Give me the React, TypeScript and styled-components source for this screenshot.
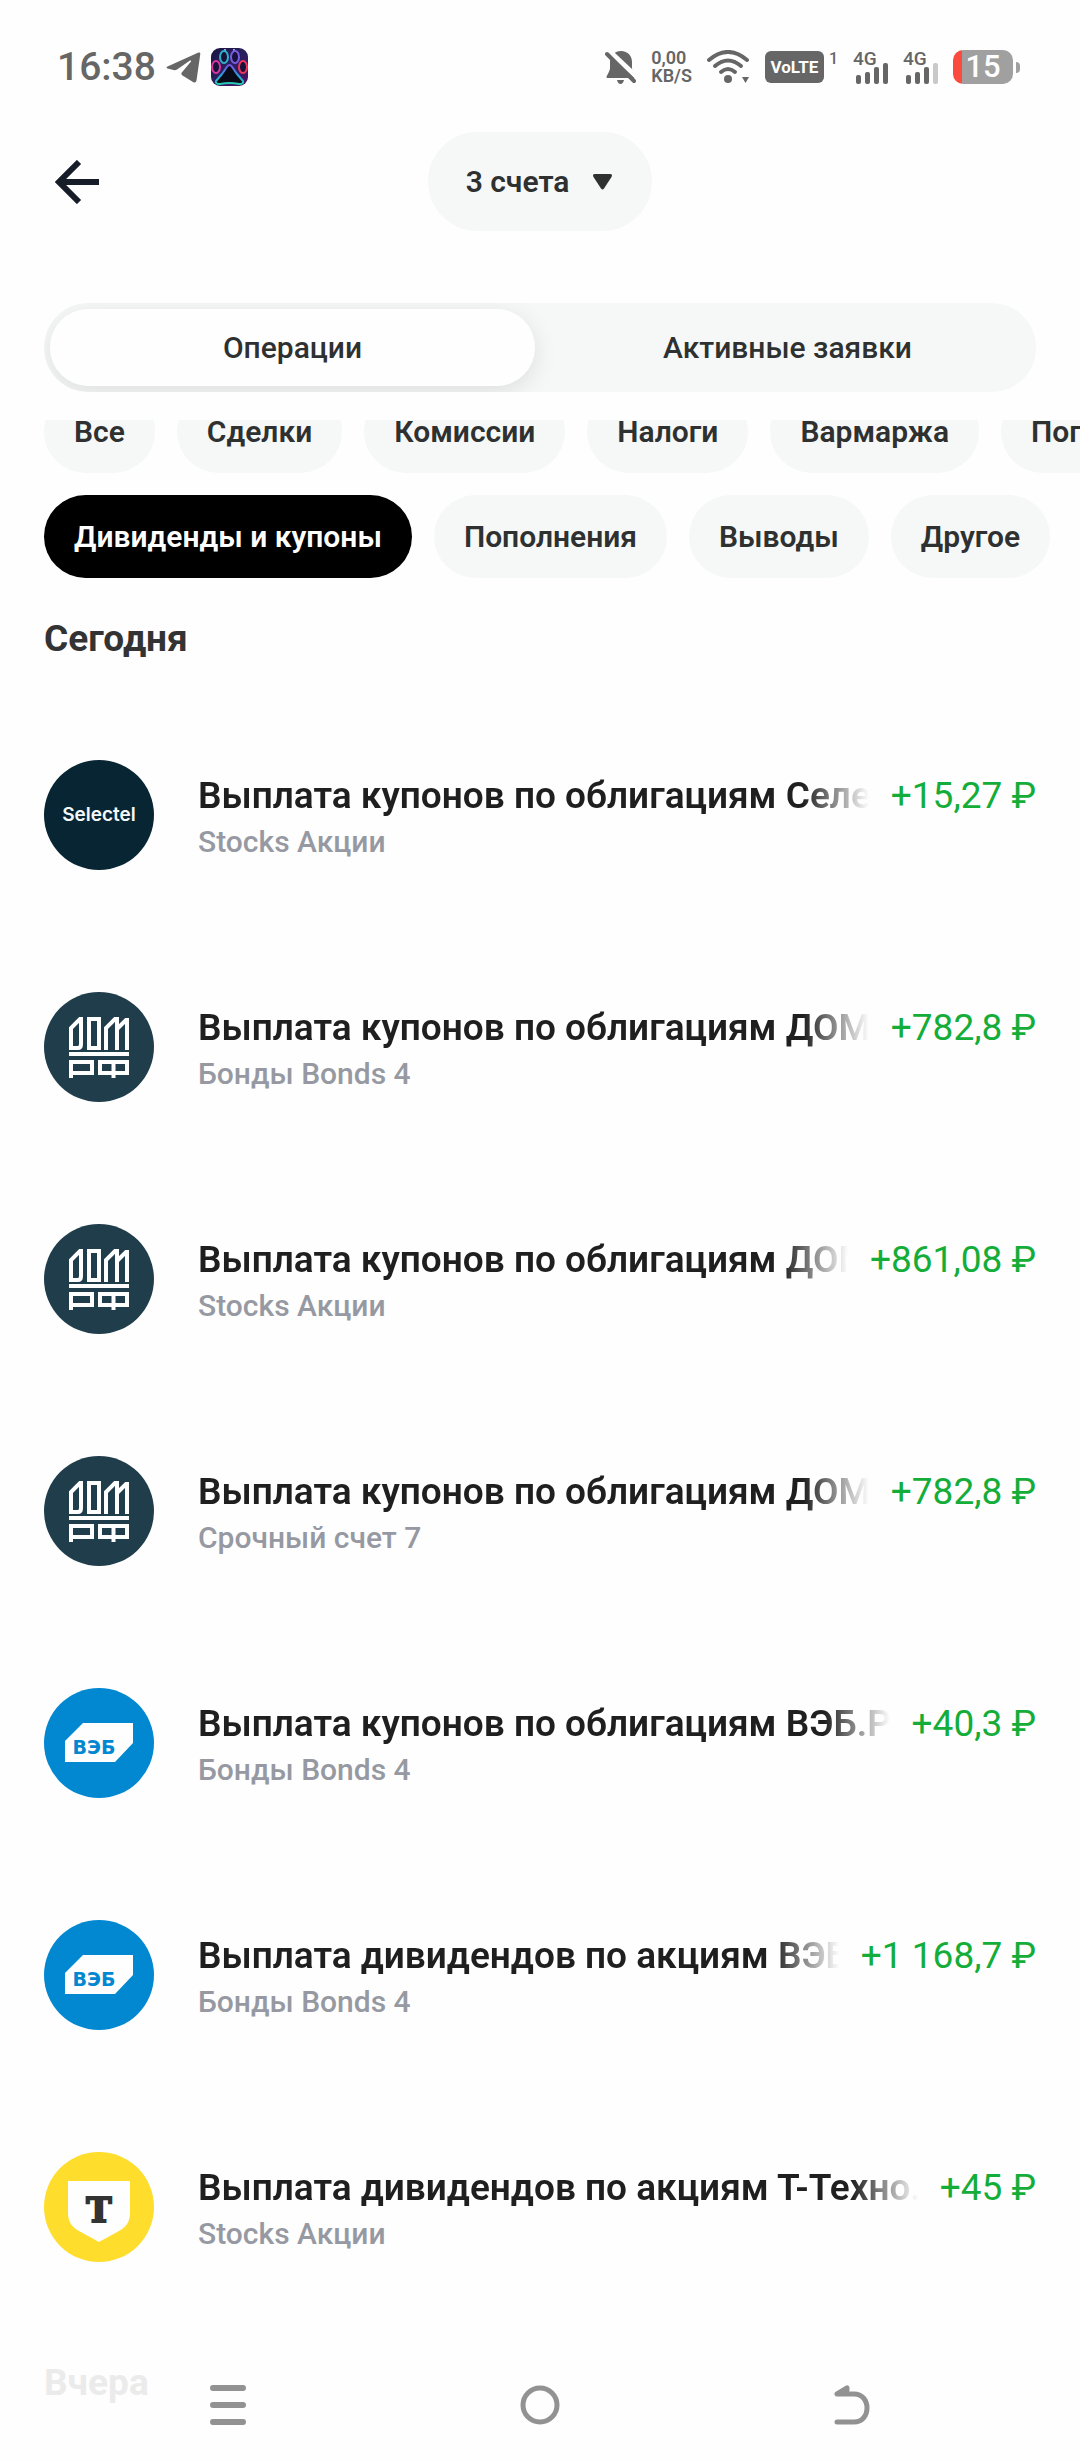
import React from "react";
import styled, { createGlobalStyle } from "styled-components";

const GlobalStyle = createGlobalStyle`
  *, *::before, *::after { box-sizing: border-box; }
  body {
    margin: 0;
    background: #fefefe;
    color: #2f3131;
    font-family: Roboto, "Noto Sans", sans-serif;
    overflow-x: hidden;
  }
  button { font: inherit; color: inherit; border: 0; padding: 0; background: none; cursor: pointer; }
  h2, p, ul { margin: 0; padding: 0; }
  svg { display: block; flex: none; }
`;

const Screen = styled.div`
  display: flex;
  flex-direction: column;
  min-height: 100vh;
  overflow: hidden;
`;

const StatusBar = styled.header`
  display: flex;
  justify-content: space-between;
  align-items: center;
  height: 132px;
  padding: 2px 60px 0 57px;
  color: #666666;
`;

const StatusGroup = styled.div<{ $gap: number }>`
  display: flex;
  align-items: center;
  gap: ${(p) => p.$gap}px;
`;

const Clock = styled.time`
  font-size: 39px;
  line-height: 46px;
  font-weight: 500;
`;

const NetSpeed = styled.div`
  font-size: 18px;
  line-height: 18px;
  font-weight: 600;
`;

const VolteBadge = styled.span`
  display: flex;
  align-items: center;
  justify-content: center;
  width: 59px;
  height: 32px;
  border-radius: 6px;
  background: #666666;
  color: #fefefe;
  font-size: 17px;
  font-weight: 700;
`;

const SimNumber = styled.sup`
  align-self: flex-start;
  font-size: 16px;
  line-height: 16px;
  font-weight: 500;
`;

const Signal = styled.div`
  display: flex;
  flex-direction: column;
  width: 35px;
  font-size: 19px;
  line-height: 15px;
  font-weight: 500;
`;

const SignalBars = styled.svg`
  margin: -4px 0 0 3px;
`;

const Battery = styled.div`
  display: flex;
  align-items: center;
  gap: 3px;
`;

const BatteryBody = styled.span`
  display: flex;
  align-items: center;
  justify-content: center;
  width: 60px;
  height: 34px;
  border-radius: 10px;
  background: linear-gradient(90deg, #fb4b3e 9px, #a0a0a0 9px);
  color: #fefefe;
  font-size: 31px;
  line-height: 34px;
  font-weight: 500;
`;

const BatteryTip = styled.span`
  width: 4px;
  height: 11px;
  border-radius: 0 4px 4px 0;
  background: #a0a0a0;
`;

const TopBar = styled.nav`
  display: grid;
  grid-template-columns: 1fr auto 1fr;
  align-items: center;
  padding: 0 44px;
`;

const BackButton = styled.button`
  display: flex;
  justify-self: start;
  padding: 11px;
`;

const AccountButton = styled.button`
  display: flex;
  align-items: center;
  gap: 24px;
  height: 99px;
  padding: 0 40px 0 38px;
  border-radius: 50px;
  background: #f6f8f8;
  font-size: 30px;
  font-weight: 600;
`;

const Tabs = styled.div`
  display: grid;
  grid-template-columns: 1fr 1fr;
  column-gap: 10px;
  height: 89px;
  margin: 72px 44px 0;
  padding: 6px;
  border-radius: 44px;
  background: #f6f8f8;
  overflow: hidden;
`;

const Tab = styled.button<{ $active?: boolean }>`
  border-radius: 38px;
  font-size: 30px;
  font-weight: 500;
  background: ${(p) => (p.$active ? "#fefefe" : "transparent")};
  box-shadow: ${(p) => (p.$active ? "0 6px 24px rgba(0, 0, 0, 0.1)" : "none")};
`;

const Filters = styled.div`
  margin-top: 28px;
  overflow: hidden;
`;

const FilterRows = styled.div`
  display: flex;
  flex-direction: column;
  gap: 22px;
  margin-top: -30px;
  padding-left: 44px;
`;

const FilterRow = styled.div`
  display: flex;
  gap: 22px;
`;

const Chip = styled.button<{ $active?: boolean }>`
  flex: none;
  height: 83px;
  padding: 0 30px;
  border-radius: 42px;
  background: ${(p) => (p.$active ? "#000000" : "#f6f8f8")};
  color: ${(p) => (p.$active ? "#fefefe" : "#2f3131")};
  font-size: 30px;
  font-weight: 600;
  white-space: nowrap;
`;

const Day = styled.section`
  display: flex;
  flex-direction: column;
  padding-top: 40px;
`;

const DayTitle = styled.h2<{ $faded?: boolean }>`
  padding: 0 44px;
  font-size: 37px;
  line-height: 42px;
  font-weight: 700;
  color: ${(p) => (p.$faded ? "#ebebeb" : "#333333")};
`;

const Operations = styled.ul`
  display: flex;
  flex-direction: column;
  gap: 122px;
  margin: 100px 44px 60px;
  list-style: none;
`;

const Operation = styled.li`
  display: flex;
  align-items: flex-start;
  gap: 44px;
  height: 110px;
`;

const Details = styled.div`
  flex: 1;
  min-width: 0;
  padding-top: 14px;
`;

const Headline = styled.div`
  display: flex;
  gap: 22px;
  font-size: 37px;
  line-height: 44px;
`;

const Title = styled.p`
  flex: 1;
  min-width: 0;
  overflow: hidden;
  white-space: nowrap;
  font-weight: 600;
  color: #1f1f1f;
  mask-image: linear-gradient(270deg, transparent, #000000 66px);
`;

const Amount = styled.span`
  flex: none;
  color: #14ad39;
`;

const Account = styled.p`
  margin-top: 6px;
  font-size: 30px;
  line-height: 36px;
  font-weight: 500;
  color: #9699a2;
`;

const SystemNav = styled.nav`
  position: fixed;
  left: 0;
  right: 0;
  bottom: 0;
  display: grid;
  grid-template-columns: repeat(3, 1fr);
  height: 110px;
  padding: 0 72px;
`;

const NavButton = styled.button`
  display: flex;
  align-items: center;
  justify-content: center;
`;

const LogoText = styled.text<{ $family: string; $size: number; $weight: number }>`
  font-family: ${(p) => p.$family}, sans-serif;
  font-size: ${(p) => p.$size}px;
  font-weight: ${(p) => p.$weight};
  text-anchor: middle;
`;

type Brand = "selectel" | "domrf" | "veb" | "tbank";

function SelectelLogo() {
  return (
    <svg width="110" height="110" viewBox="0 0 110 110" aria-hidden="true">
      <circle cx="55" cy="55" r="55" fill="#072532" />
      <LogoText x="55" y="61" fill="#f4f8fa" $family="Inter" $size={19} $weight={600}>Selectel</LogoText>
    </svg>
  );
}

function DomRfLogo() {
  return (
    <svg width="110" height="110" viewBox="0 0 110 110" aria-hidden="true">
      <circle cx="55" cy="55" r="55" fill="#1f3d4b" />
      <g fill="none" stroke="#ffffff" strokeWidth="4">
        <path d="M27 56V36L36 27H37V52Q37 56 34 56Z" />
        <path d="M45 27H55V56H45Z" />
        <path d="M62 58V36L71 27H73V58M73 37L82 28H83V58" />
        <path d="M25 62H85" />
        <path d="M27 86V70H48V81H27" />
        <path d="M56 70H83V81H56ZM69.500 70V86" />
      </g>
    </svg>
  );
}

function VebLogo() {
  return (
    <svg width="110" height="110" viewBox="0 0 110 110" aria-hidden="true">
      <circle cx="55" cy="55" r="55" fill="#0288d1" />
      <path d="M39 35H89V55L71 74H21V53Z" fill="#fefefe" />
      <LogoText x="50" y="66" fill="#0288d1" $family="DejaVu Sans" $size={19} $weight={700}>ВЭБ</LogoText>
    </svg>
  );
}

function TBankLogo() {
  return (
    <svg width="110" height="110" viewBox="0 0 110 110" aria-hidden="true">
      <circle cx="55" cy="55" r="55" fill="#ffdd2d" />
      <path d="M24 29H86V61C86 70 82 75 75 79L55 90L35 79C28 75 24 70 24 61Z" fill="#fefefe" />
      <LogoText x="55" y="70" fill="#333333" stroke="#333333" strokeWidth="2" $family="DejaVu Serif" $size={34} $weight={700}>Т</LogoText>
    </svg>
  );
}

const logos: Record<Brand, () => React.ReactElement> = {
  selectel: SelectelLogo,
  domrf: DomRfLogo,
  veb: VebLogo,
  tbank: TBankLogo,
};

const operations: { brand: Brand; title: string; account: string; amount: string }[] = [
  { brand: "selectel", title: "Выплата купонов по облигациям Селектел", account: "Stocks Акции", amount: "+15,27 ₽" },
  { brand: "domrf", title: "Выплата купонов по облигациям ДОМ.РФ", account: "Бонды Bonds 4", amount: "+782,8 ₽" },
  { brand: "domrf", title: "Выплата купонов по облигациям ДОМ.РФ", account: "Stocks Акции", amount: "+861,08 ₽" },
  { brand: "domrf", title: "Выплата купонов по облигациям ДОМ.РФ", account: "Срочный счет 7", amount: "+782,8 ₽" },
  { brand: "veb", title: "Выплата купонов по облигациям ВЭБ.РФ", account: "Бонды Bonds 4", amount: "+40,3 ₽" },
  { brand: "veb", title: "Выплата дивидендов по акциям ВЭБ.РФ", account: "Бонды Bonds 4", amount: "+1 168,7 ₽" },
  { brand: "tbank", title: "Выплата дивидендов по акциям Т-Техно...", account: "Stocks Акции", amount: "+45 ₽" },
];

const filterRows = [
  ["Все", "Сделки", "Комиссии", "Налоги", "Вармаржа", "Погашения"],
  ["Дивиденды и купоны", "Пополнения", "Выводы", "Другое"],
];

function PawIcon() {
  return (
    <svg width="37" height="38" viewBox="0 0 37 38" aria-hidden="true">
      <defs>
        <linearGradient id="pad" x1="0" y1="0" x2="0" y2="1">
          <stop offset="0" stopColor="#7a4fe0" />
          <stop offset="0.500" stopColor="#2f9be0" />
          <stop offset="1" stopColor="#25c9b0" />
        </linearGradient>
        <linearGradient id="glow" x1="0" y1="0" x2="1" y2="1">
          <stop offset="0" stopColor="#1a1440" />
          <stop offset="0.500" stopColor="#2a2060" />
          <stop offset="1" stopColor="#4a1268" />
        </linearGradient>
      </defs>
      <rect width="37" height="38" rx="9" fill="url(#glow)" />
      <g fill="#16123a" strokeWidth="2">
        <path d="M14 1V4M23 1V4" stroke="#9aa8d8" />
        <ellipse cx="13" cy="9" rx="4" ry="6" stroke="#2fb0c8" />
        <ellipse cx="24" cy="9" rx="4" ry="6" stroke="#7a5be0" />
        <ellipse cx="5" cy="19" rx="4" ry="6" stroke="#d8359f" />
        <ellipse cx="32" cy="19" rx="4" ry="6" stroke="#f0355a" />
        <path d="M18.500 17C21 17 22 21 26 26L32 33Q33 36 28 36Q18.500 34 9 36Q4 36 5 33L11 26C15 21 16 17 18.500 17Z" fill="#080a18" stroke="url(#pad)" />
      </g>
    </svg>
  );
}

function SignalMeter({ weak }: { weak?: boolean }) {
  return (
    <Signal>
      4G
      <SignalBars width="32" height="22" viewBox="0 0 32 22" aria-hidden="true">
        <g fill="#666666">
          <rect x="0" y="13" width="5" height="9" rx="2" />
          <rect x="9" y="10" width="5" height="12" rx="2" />
          <rect x="18" y="5" width="5" height="17" rx="2" />
          <rect x="27" y="1" width="5" height="21" rx="2" fill={weak ? "#c9c9c9" : "#666666"} />
        </g>
      </SignalBars>
    </Signal>
  );
}

export default function App() {
  return (
    <>
      <GlobalStyle />
      <Screen>
        <StatusBar>
          <StatusGroup $gap={10}>
            <Clock>16:38</Clock>
            <svg width="35" height="31" viewBox="0 0 35 31" fill="#666666" aria-label="Telegram">
              <path d="M1.500 14.500L32.500 .600Q34.500 0 34.300 2L30.500 28.500Q29.800 31.500 27 30L16.500 23.500Q14.500 22 16 20.300L25 9.500Q25.500 8 24 8.500L11 17.500Q9.500 18.500 7.500 18L1.500 16.500Q-.5 15.500 1.500 14.500Z" />
            </svg>
            <PawIcon />
          </StatusGroup>
          <StatusGroup $gap={15}>
            <svg width="31" height="34" viewBox="0 0 31 34" aria-label="Без звука">
              <path d="M16 1C23 1 27 6 27 12V18C27 22 31 26 30 28H2C0 27 5 22 5 18V12C5 6 9 1 16 1Z" fill="#666666" />
              <path d="M12 30H19Q18 34 15.500 34Q13 34 12 30Z" fill="#666666" />
              <path d="M0 -3L33 28" stroke="#fefefe" strokeWidth="5" />
              <path d="M2 4L29 31" stroke="#666666" strokeWidth="4" strokeLinecap="round" />
            </svg>
            <NetSpeed>0,00<br />KB/S</NetSpeed>
            <svg width="43" height="34" viewBox="0 0 43 34" aria-label="Wi-Fi">
              <g fill="none" stroke="#666666" strokeWidth="4" strokeLinecap="round">
                <path d="M2 10Q21 -6 40 10" />
                <path d="M8 16Q21 5 34 16" />
                <path d="M14 22Q21 16 28 22" />
              </g>
              <circle cx="21" cy="29" r="4" fill="#666666" />
              <path d="M35 27H42L38.500 33Z" fill="#666666" />
            </svg>
            <StatusGroup $gap={5}>
              <VolteBadge>VoLTE</VolteBadge>
              <SimNumber>1</SimNumber>
            </StatusGroup>
            <SignalMeter />
            <SignalMeter weak />
            <Battery>
              <BatteryBody>15</BatteryBody>
              <BatteryTip />
            </Battery>
          </StatusGroup>
        </StatusBar>

        <TopBar>
          <BackButton aria-label="Назад">
            <svg width="44" height="44" viewBox="0 0 44 44" fill="none" stroke="#161c28" strokeWidth="6">
              <path d="M24 2L4 22L24 42M4 22H44" />
            </svg>
          </BackButton>
          <AccountButton>
            3 счета
            <svg width="19" height="16" viewBox="0 0 19 16" fill="#2f3131" aria-hidden="true">
              <path d="M2 0H17Q20 0 18.500 3L11 14.500Q9.500 16.500 8 14.500L.5 3Q-1 0 2 0Z" />
            </svg>
          </AccountButton>
        </TopBar>

        <Tabs role="tablist">
          <Tab role="tab" aria-selected="true" $active>Операции</Tab>
          <Tab role="tab" aria-selected="false">Активные заявки</Tab>
        </Tabs>

        <Filters>
          <FilterRows>
            {filterRows.map((row) => (
              <FilterRow key={row[0]}>
                {row.map((label) => (
                  <Chip key={label} $active={label === "Дивиденды и купоны"}>{label}</Chip>
                ))}
              </FilterRow>
            ))}
          </FilterRows>
        </Filters>

        <Day>
          <DayTitle>Сегодня</DayTitle>
          <Operations>
            {operations.map((op, i) => {
              const Logo = logos[op.brand];
              return (
                <Operation key={i}>
                  <Logo />
                  <Details>
                    <Headline>
                      <Title>{op.title}</Title>
                      <Amount>{op.amount}</Amount>
                    </Headline>
                    <Account>{op.account}</Account>
                  </Details>
                </Operation>
              );
            })}
          </Operations>
        </Day>
        <Day>
          <DayTitle $faded>Вчера</DayTitle>
        </Day>
      </Screen>

      <SystemNav>
        <NavButton aria-label="Меню">
          <svg width="36" height="40" viewBox="0 0 36 40" stroke="#929292" strokeWidth="6" strokeLinecap="round">
            <path d="M3 3H33M3 20H33M3 37H33" />
          </svg>
        </NavButton>
        <NavButton aria-label="Домой">
          <svg width="40" height="40" viewBox="0 0 40 40" fill="none" stroke="#929292" strokeWidth="5">
            <circle cx="20" cy="20" r="17" />
          </svg>
        </NavButton>
        <NavButton aria-label="Вернуться">
          <svg width="36" height="40" viewBox="0 0 36 40" fill="none" stroke="#929292" strokeWidth="5" strokeLinecap="round" strokeLinejoin="round">
            <path d="M13 3L3 9H20C28 9 33 15 33 23C33 31 28 37 20 37H3M3 9L13 5" />
          </svg>
        </NavButton>
      </SystemNav>
    </>
  );
}
